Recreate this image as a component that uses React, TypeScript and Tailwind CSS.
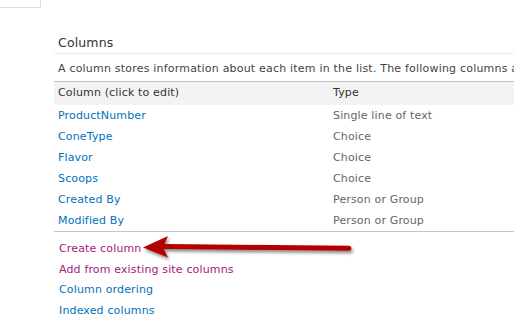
import React from 'react'

const fields = [
	{ name: 'ProductNumber', type: 'Single line of text' },
	{ name: 'ConeType', type: 'Choice' },
	{ name: 'Flavor', type: 'Choice' },
	{ name: 'Scoops', type: 'Choice' },
	{ name: 'Created By', type: 'Person or Group' },
	{ name: 'Modified By', type: 'Person or Group' },
]

function Arrow() {
	return (
		<svg
			className="pointer-events-none absolute left-[138px] top-[232px]"
			width="230"
			height="34"
			viewBox="0 0 230 34"
		>
			<defs>
				<filter id="shadow" x="-10%" y="-40%" width="120%" height="200%">
					<feDropShadow dx="1.5" dy="2.5" stdDeviation="1.5" floodColor="#000" floodOpacity="0.45" />
				</filter>
			</defs>
			<g filter="url(#shadow)">
				<path d="M26 14.5 L211 16.2" stroke="#b30000" strokeWidth="5" strokeLinecap="round" />
				<path d="M5 15.5 L30 4 L25 15.5 L30 25.5 Z" fill="#b30000" />
			</g>
		</svg>
	)
}

export default function App() {
	return (
		<div
			className="relative h-[334px] w-[514px] overflow-hidden bg-white text-[11px] tracking-[0.15px]"
			style={{ fontFamily: '"DejaVu Sans", Verdana, sans-serif' }}
		>
			<div className="h-[8px] w-[41px] border-b border-r border-[#dcdcdc]" />

			<div className="ml-[54px] mt-[26px] w-[600px]">
				<div className="flex h-[20px] items-center border-b border-[#ebebeb] pl-[4px] text-[12.5px] text-[#333]">
					Columns
				</div>
				<div className="flex h-[27px] items-center whitespace-nowrap pl-[4px] pt-[4px] tracking-[0.2px] text-[#444]">
					A column stores information about each item in the list. The following columns are currently available in this list:
				</div>

				<div className="flex h-[24px] items-center border-t border-[#c6c6c6] bg-[#f3f3f3] text-[#333]">
					<div className="w-[279px] pl-[4px]">Column (click to edit)</div>
					<div>Type</div>
				</div>

				{fields.map((f) => (
					<div className="flex h-[21px] items-center pt-[2px]" key={f.name}>
						<div className="w-[279px] pl-[4px] text-[#0072bc]">{f.name}</div>
						<div className="text-[#666]">{f.type}</div>
					</div>
				))}

				<div className="border-t border-[#c6c6c6] pl-[5px] pt-[7px]">
					<div className="flex h-[20.5px] items-center text-[#a4197c]">Create column</div>
					<div className="flex h-[20.5px] items-center text-[#a4197c]">Add from existing site columns</div>
					<div className="flex h-[20.5px] items-center text-[#0072bc]">Column ordering</div>
					<div className="flex h-[20.5px] items-center text-[#0072bc]">Indexed columns</div>
				</div>
			</div>

			<Arrow />
		</div>
	)
}
